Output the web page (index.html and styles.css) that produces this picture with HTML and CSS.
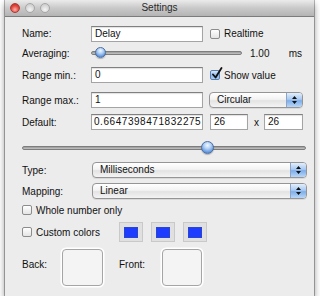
FILE: index.html
```html
<!DOCTYPE html>
<html>
<head>
<meta charset="utf-8">
<link rel="stylesheet" href="styles.css">
</head>
<body>
<div class="window">
  <div class="titlebar">
    <div class="lights"><span class="light red"></span><span class="light"></span><span class="light"></span></div>
    <div class="title">Settings</div>
    <div class="spacer"></div>
  </div>
  <div class="content">
    <div class="row r-name">
      <span class="lbl">Name:</span>
      <div class="field">Delay</div>
      <span class="check gap7"></span><span class="ctext">Realtime</span>
    </div>
    <div class="row r-avg">
      <span class="lbl">Averaging:</span>
      <div class="slider s-avg"><div class="track"></div><span class="knob k-avg"></span></div>
      <span class="val">1.00</span>
      <span class="unit">ms</span>
    </div>
    <div class="row r-min">
      <span class="lbl">Range min.:</span>
      <div class="field">0</div>
      <span class="check checked gap7"><svg class="tick" width="12" height="13" viewBox="0 0 12 13"><path d="M2 7.5 L4.6 10.5 L10.5 1" fill="none" stroke="#111" stroke-width="1.8" stroke-linecap="round" stroke-linejoin="round"/></svg></span><span class="ctext">Show value</span>
    </div>
    <div class="row r-max">
      <span class="lbl">Range max.:</span>
      <div class="field">1</div>
      <div class="popup p-circ"><span class="ptext">Circular</span><span class="arrows"><svg width="7" height="10" viewBox="0 0 7 10"><path d="M3.5 1 L6 4 L1 4 Z M1 6 L6 6 L3.5 9 Z" fill="#111"/></svg></span></div>
    </div>
    <div class="row r-def">
      <span class="lbl">Default:</span>
      <div class="field num">0.6647398471832275</div>
      <div class="field small gap7">26</div>
      <span class="times">x</span>
      <div class="field small2">26</div>
    </div>
    <div class="row r-big">
      <div class="slider s-big"><div class="track"></div><span class="knob k-big"></span></div>
    </div>
    <div class="row r-type">
      <span class="lbl">Type:</span>
      <div class="popup p-wide"><span class="ptext">Milliseconds</span><span class="arrows"><svg width="7" height="10" viewBox="0 0 7 10"><path d="M3.5 1 L6 4 L1 4 Z M1 6 L6 6 L3.5 9 Z" fill="#111"/></svg></span></div>
    </div>
    <div class="row r-map">
      <span class="lbl">Mapping:</span>
      <div class="popup p-wide"><span class="ptext">Linear</span><span class="arrows"><svg width="7" height="10" viewBox="0 0 7 10"><path d="M3.5 1 L6 4 L1 4 Z M1 6 L6 6 L3.5 9 Z" fill="#111"/></svg></span></div>
    </div>
    <div class="row r-whole">
      <span class="check"></span><span class="ctext">Whole number only</span>
    </div>
    <div class="row r-custom">
      <div class="cgroup"><span class="check"></span><span class="ctext">Custom colors</span></div>
      <div class="cw"><span class="sw"></span></div>
      <div class="cw"><span class="sw"></span></div>
      <div class="cw"><span class="sw"></span></div>
    </div>
    <div class="row r-wells">
      <span class="wlbl back">Back:</span>
      <div class="bigwell"></div>
      <span class="wlbl front">Front:</span>
      <div class="bigwell bw2"></div>
    </div>
  </div>
</div>
</body>
</html>
```
FILE: styles.css
```css
html, body {
  margin: 0;
  padding: 0;
  background: #ffffff;
}
body {
  font-family: "Liberation Sans", Arial, sans-serif;
  font-size: 10px;
  color: #111;
}
.window {
  margin-left: 5px;
  width: 309px;
  height: 296px;
  background: #ececec;
  box-shadow: 0 0 0 1px rgba(0,0,0,0.28), 0 4px 7px rgba(0,0,0,0.45);
}
.titlebar {
  height: 16px;
  border-bottom: 1px solid #7c7c7c;
  background: linear-gradient(#ebebeb, #c9c9c9 50%, #b4b4b4);
  display: grid;
  grid-template-columns: 1fr auto 1fr;
  align-items: center;
}
.lights {
  display: flex;
  gap: 5px;
  padding-left: 5px;
}
.light {
  width: 10px;
  height: 10px;
  border-radius: 50%;
  box-sizing: border-box;
  border: 1px solid #a6a6a6;
  background: radial-gradient(circle at 50% 70%, #f4f4f4, #d6d6d6 60%, #c4c4c4);
}
.light.red {
  border-color: #a73b35;
  background: radial-gradient(circle at 50% 70%, #ffb0a8, #e3453c 55%, #b8281f);
}
.title {
  font-size: 10px;
  color: #2a2a2a;
  line-height: 16px;
}
.content {
  padding: 0 8px 0 17px;
  display: flex;
  flex-direction: column;
}
.row {
  display: flex;
  align-items: center;
}
.lbl {
  width: 69px;
  flex: none;
}
.field {
  width: 112px;
  height: 16px;
  box-sizing: border-box;
  border: 1px solid #a4a4a4;
  border-top-color: #808080;
  background: #fff;
  padding: 0 3px;
  line-height: 14px;
  white-space: nowrap;
  overflow: hidden;
  flex: none;
  box-shadow: inset 0 1px 1px rgba(0,0,0,0.12);
}
.field.num {
  letter-spacing: 0.55px;
  padding: 0 1px 0 2px;
}
.field.small { width: 38px; }
.field.small2 { width: 39px; }
.gap7 { margin-left: 7px; }
.times { margin-left: 6px; width: 10px; }
.check {
  position: relative;
  width: 10px;
  height: 10px;
  box-sizing: border-box;
  border: 1px solid #8c8c8c;
  border-radius: 2px;
  background: linear-gradient(#ffffff, #e4e4e4);
  flex: none;
}
.check.checked {
  border-color: #5a7fb0;
  background: linear-gradient(#d9e9fb, #8fb8e8 55%, #a9cdf3);
}
.tick {
  position: absolute;
  left: 0px;
  top: -4px;
}
.ctext { margin-left: 4px; }
.r-name { margin-top: 8px; height: 17px; }
.r-avg { margin-top: 4px; height: 14px; }
.r-min { margin-top: 7px; height: 16px; }
.r-max { margin-top: 9px; height: 16px; }
.r-def { margin-top: 6px; height: 16px; }
.r-big { margin-top: 11px; height: 14px; }
.r-type { margin-top: 7px; height: 16px; }
.r-map { margin-top: 5px; height: 16px; }
.r-whole { margin-top: 4px; height: 14px; }
.r-custom { margin-top: 5px; height: 20px; }
.r-wells { margin-top: 7px; height: 37px; }

.slider {
  position: relative;
  display: flex;
  align-items: center;
  height: 14px;
}
.s-avg { width: 151px; }
.s-big { width: 284px; }
.track {
  width: 100%;
  height: 4px;
  box-sizing: border-box;
  border-radius: 2px;
  border: 1px solid #7d7d7d;
  background: linear-gradient(#9a9a9a, #c4c4c4);
}
.knob {
  position: absolute;
  border-radius: 50%;
  box-sizing: border-box;
  border: 1px solid #4d6f9f;
  background: radial-gradient(circle at 50% 30%, #f2f8ff 0, #b5d2f5 35%, #5f95de 75%, #3d74cc);
  box-shadow: 0 1px 1px rgba(0,0,0,0.25);
}
.k-avg { width: 11px; height: 11px; left: 4px; top: 1px; }
.k-big { width: 13px; height: 13px; left: 179px; top: 0px; }
.val { margin-left: 8px; }
.unit { margin-left: auto; margin-right: 4px; }

.popup {
  height: 16px;
  box-sizing: border-box;
  border: 1px solid #959595;
  border-radius: 4px;
  background: linear-gradient(#ffffff, #f3f3f3 45%, #e3e3e3 55%, #f4f4f4);
  display: flex;
  align-items: stretch;
  overflow: hidden;
  box-shadow: 0 1px 0 rgba(0,0,0,0.08);
}
.p-circ { width: 94px; margin-left: 6px; }
.p-wide { flex: 1; margin-left: 1px; margin-right: -1px; }
.ptext {
  flex: 1;
  padding-left: 7px;
  line-height: 14px;
}
.arrows {
  width: 15px;
  border-left: 1px solid #8aa5c8;
  background: linear-gradient(#e2eefc, #a9c9f1 45%, #7eaee9 55%, #b9d7f8);
  display: flex;
  align-items: center;
  justify-content: center;
}
.cgroup {
  width: 97px;
  display: flex;
  align-items: center;
  flex: none;
}
.cw {
  width: 24px;
  height: 20px;
  box-sizing: border-box;
  border: 1px solid #c9c9c9;
  background: #e0e0e0;
  display: flex;
  align-items: center;
  justify-content: center;
  margin-right: 8px;
  flex: none;
}
.sw {
  width: 14px;
  height: 11px;
  box-sizing: border-box;
  border: 1px solid #2a45d0;
  background: #1e3cff;
}
.wlbl { align-self: center; margin-top: -6px; }
.back { width: 40px; }
.front { width: 43px; margin-left: 16px; }
.bigwell {
  width: 41px;
  height: 37px;
  box-sizing: border-box;
  border: 1px solid #a5a5a5;
  border-radius: 4px;
  background: #f4f4f4;
  box-shadow: 0 0 0 1.5px #ffffff;
}
.bw2 { width: 40px; }
```
